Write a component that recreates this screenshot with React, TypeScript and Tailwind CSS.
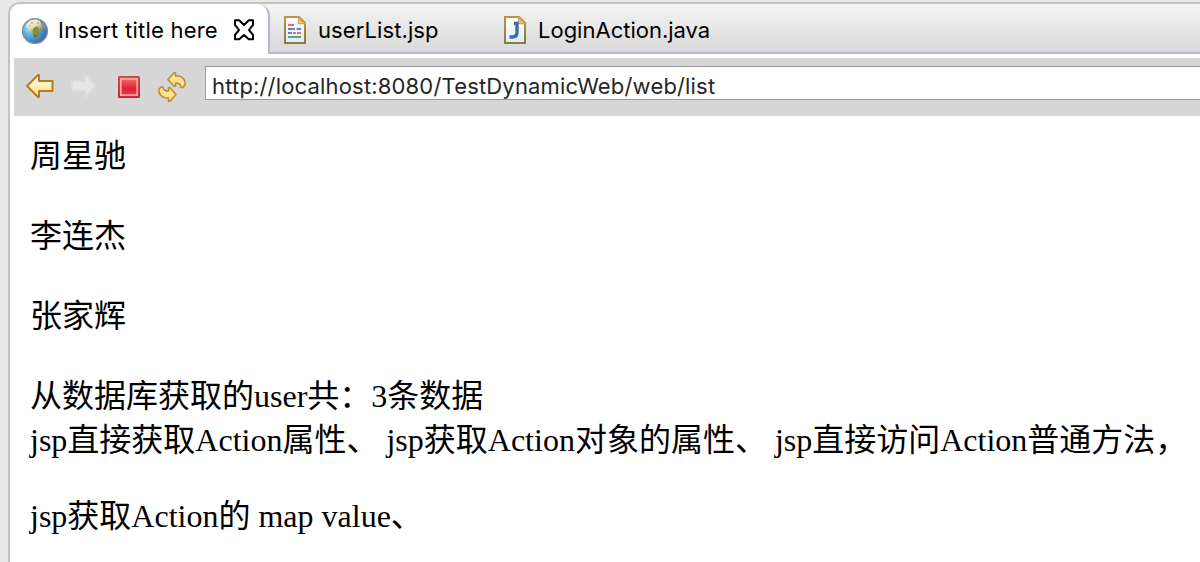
import type { ReactNode } from "react";

function GlobeIcon() {
  return (
    <svg className="mt-[2px] block h-[28px] w-[28px] shrink-0" viewBox="0 0 28 28">
      <defs>
        <radialGradient id="sea" cx="0.3" cy="0.35" r="0.8">
          <stop offset="0" stopColor="#b5e4ee" />
          <stop offset="0.45" stopColor="#55acd8" />
          <stop offset="1" stopColor="#3458a4" />
        </radialGradient>
        <linearGradient id="land" x1="0.1" y1="0" x2="0.6" y2="1">
          <stop offset="0" stopColor="#fdfbe6" />
          <stop offset="0.45" stopColor="#e3e0b4" />
          <stop offset="0.75" stopColor="#8a9c58" />
          <stop offset="1" stopColor="#5b7f48" />
        </linearGradient>
      </defs>
      <circle cx="14" cy="14" r="12.4" fill="url(#sea)" stroke="#7c8f9f" strokeWidth="1.4" />
      <path d="M5 8L9 3.5L15 2.2L19 4L21 9L22 13L19 15L16.5 20L13.5 21L11 16L7 14L9 11L6 11Z" fill="url(#land)" />
      <path d="M12 12L15 9.5L18 11L17 15L14 17L11.5 15Z" fill="#7f8f45" />
      <path d="M12.5 17.5L15.5 18L14 21Z" fill="#b8402c" />
      <path d="M21 5L24 9L24.5 13L22 10Z" fill="#9a9a6a" />
      <path d="M10 6h2M16 6h2M8 9h1" stroke="#c0a878" strokeWidth="1.4" />
    </svg>
  );
}

function CloseIcon() {
  return (
    <svg className="block h-[22px] w-[22px] shrink-0" viewBox="0 0 22 22">
      <path
        d="M2 1.2H6.2L11 6L15.8 1.2H20V5.8L16 11L20 15.8V20.2H15.8L11 16L6.2 20.2H2V15.8L6 11L2 5.8Z"
        fill="#fff"
        stroke="#000"
        strokeWidth="2"
        strokeLinejoin="round"
      />
    </svg>
  );
}

function FileIcon({ children }: { children: ReactNode }) {
  return (
    <svg className="block h-[28px] w-[22px] shrink-0" viewBox="0 0 22 28">
      <defs>
        <linearGradient id="edge" x1="0" y1="0" x2="0" y2="1">
          <stop offset="0" stopColor="#bd9247" />
          <stop offset="1" stopColor="#8a7a45" />
        </linearGradient>
        <linearGradient id="paper" x1="0" y1="0" x2="0" y2="1">
          <stop offset="0" stopColor="#ffffff" />
          <stop offset="1" stopColor="#dfeaf8" />
        </linearGradient>
      </defs>
      <path d="M1 1H15L21 7V27H1Z" fill="url(#paper)" stroke="url(#edge)" strokeWidth="2" />
      <path d="M14.4 1.5V7.6H20.5Z" fill="#edc27a" stroke="#d6a75c" strokeWidth="1.2" />
      {children}
    </svg>
  );
}

function BackIcon() {
  return (
    <svg className="block h-[26px] w-[30px] shrink-0" viewBox="0 0 30 26">
      <defs>
        <linearGradient id="gold" x1="0" y1="0" x2="0" y2="1">
          <stop offset="0" stopColor="#fffdf0" />
          <stop offset="1" stopColor="#ffdf86" />
        </linearGradient>
      </defs>
      <path
        d="M2 13L13 2H14V8H27.5V18H14V24H13Z"
        fill="url(#gold)"
        stroke="#b57a26"
        strokeWidth="2"
        strokeLinejoin="round"
      />
    </svg>
  );
}

function ForwardIcon() {
  return (
    <svg className="block h-[26px] w-[28px] shrink-0" viewBox="0 0 28 26">
      <path
        d="M26 13L16 2H15V8H2V18H15V24H16Z"
        fill="#e6e6e5"
        stroke="#dcdcdb"
        strokeWidth="2"
        strokeLinejoin="round"
      />
    </svg>
  );
}

function StopIcon() {
  return (
    <svg className="block h-[22px] w-[22px] shrink-0" viewBox="0 0 22 22">
      <defs>
        <linearGradient id="stopEdge" x1="0" y1="0" x2="0" y2="1">
          <stop offset="0" stopColor="#d0453f" />
          <stop offset="1" stopColor="#bd2038" />
        </linearGradient>
        <linearGradient id="stopFill" x1="0" y1="0" x2="0" y2="1">
          <stop offset="0" stopColor="#ee6a6a" />
          <stop offset="0.6" stopColor="#e21f31" />
          <stop offset="1" stopColor="#ea3a4b" />
        </linearGradient>
      </defs>
      <rect x="0" y="0" width="22" height="22" rx="1.5" fill="url(#stopEdge)" />
      <rect x="2.8" y="2.8" width="16.4" height="16.4" fill="url(#stopFill)" stroke="#f3a9a6" strokeWidth="1.8" />
    </svg>
  );
}

function RefreshIcon() {
  return (
    <svg className="block h-[32px] w-[30px] shrink-0" viewBox="0 0 30 32">
      <g fill="#ffe28f" stroke="#c08a38" strokeWidth="1.6" strokeLinejoin="round">
        <path d="M11 8.5L17 1.8H18.5V5H22C26 6 28.2 9 28.2 13.5L26 16.5H24C24 13.5 22.5 12 18.5 12V15.2H17Z" />
        <path d="M19 23.5L13 16.8H11.5V20C7.5 20 6 19 6 16H4L1.8 18.5C1.8 23 4 26 9 27H11.5V30.2H13Z" />
      </g>
    </svg>
  );
}

function TabBar() {
  return (
    <div className="flex h-[50px] shrink-0 text-[22px] leading-[28px] text-black">
      <div className="flex w-[260px] shrink-0 items-center rounded-tr-[12px] border-r-2 border-[#b3b9cc] bg-white pl-[11px] pt-[2px]">
        <GlobeIcon />
        <span className="ml-[9px] w-[160px] tracking-[0.23px]">Insert title here</span>
        <span className="ml-[15px]">
          <CloseIcon />
        </span>
      </div>
      <div className="flex grow items-center border-b-2 border-[#b3b9cc] pl-[14px] pt-[4px]">
        <FileIcon>
          <path d="M4 9H10M9 17H12M13 17H17" stroke="#ee6b72" strokeWidth="2" />
          <path d="M4 13H11M12.5 13H17M4 17H8" stroke="#6684bd" strokeWidth="2" />
          <path d="M4 21H17" stroke="#5ca27d" strokeWidth="2" />
        </FileIcon>
        <span className="ml-[12px] w-[186px] tracking-[0.1px]">userList.jsp</span>
        <FileIcon>
          <path d="M10 7.5H13V16.5Q13 21 8.5 21H5.5" fill="none" stroke="#39709f" strokeWidth="3.4" />
        </FileIcon>
        <span className="ml-[12px]">LoginAction.java</span>
      </div>
    </div>
  );
}

function Toolbar() {
  return (
    <div className="ml-[4px] mt-[4px] flex h-[58px] shrink-0 items-center bg-[#d6d6d6]">
      <span className="mb-[2px] ml-[11px]">
        <BackIcon />
      </span>
      <span className="mb-[2px] ml-[15px]">
        <ForwardIcon />
      </span>
      <span className="ml-[20px]">
        <StopIcon />
      </span>
      <span className="ml-[17px]">
        <RefreshIcon />
      </span>
      <div className="mb-[8px] ml-[18px] flex h-[34px] grow items-center border border-r-0 border-[#9b9b9b] bg-white pl-[6px] pt-[6px] text-[22px] leading-[28px] tracking-[0.17px] text-[#262626]">
        http://localhost:8080/TestDynamicWeb/web/list
      </div>
    </div>
  );
}

function Page() {
  return (
    <main className="whitespace-pre pl-[20px] pt-[18px] font-['Liberation_Serif','Noto_Sans_CJK_SC',serif] text-[32px] leading-[44px] text-black">
      <p className="mb-[36px]">周星驰</p>
      <p className="mb-[36px]">李连杰</p>
      <p className="mb-[36px]">张家辉</p>
      <p>从数据库获取的user共：3条数据</p>
      <p className="mb-[32px]">jsp直接获取Action属性、 jsp获取Action对象的属性、 jsp直接访问Action普通方法，</p>
      <p>jsp获取Action的 map value、</p>
    </main>
  );
}

export default function App() {
  return (
    <div className="h-[562px] w-[1200px] overflow-hidden bg-[#e8e8e8] pl-[8px] pt-[2px] font-['Inter',sans-serif]">
      <div className="flex h-[560px] flex-col overflow-hidden rounded-tl-[12px] border-l-2 border-t-2 border-[#c4c4bc] bg-white">
        <div className="bg-linear-to-b from-[#f4f4f4] to-[#d8d8d8]">
          <TabBar />
        </div>
        <Toolbar />
        <Page />
      </div>
    </div>
  );
}
